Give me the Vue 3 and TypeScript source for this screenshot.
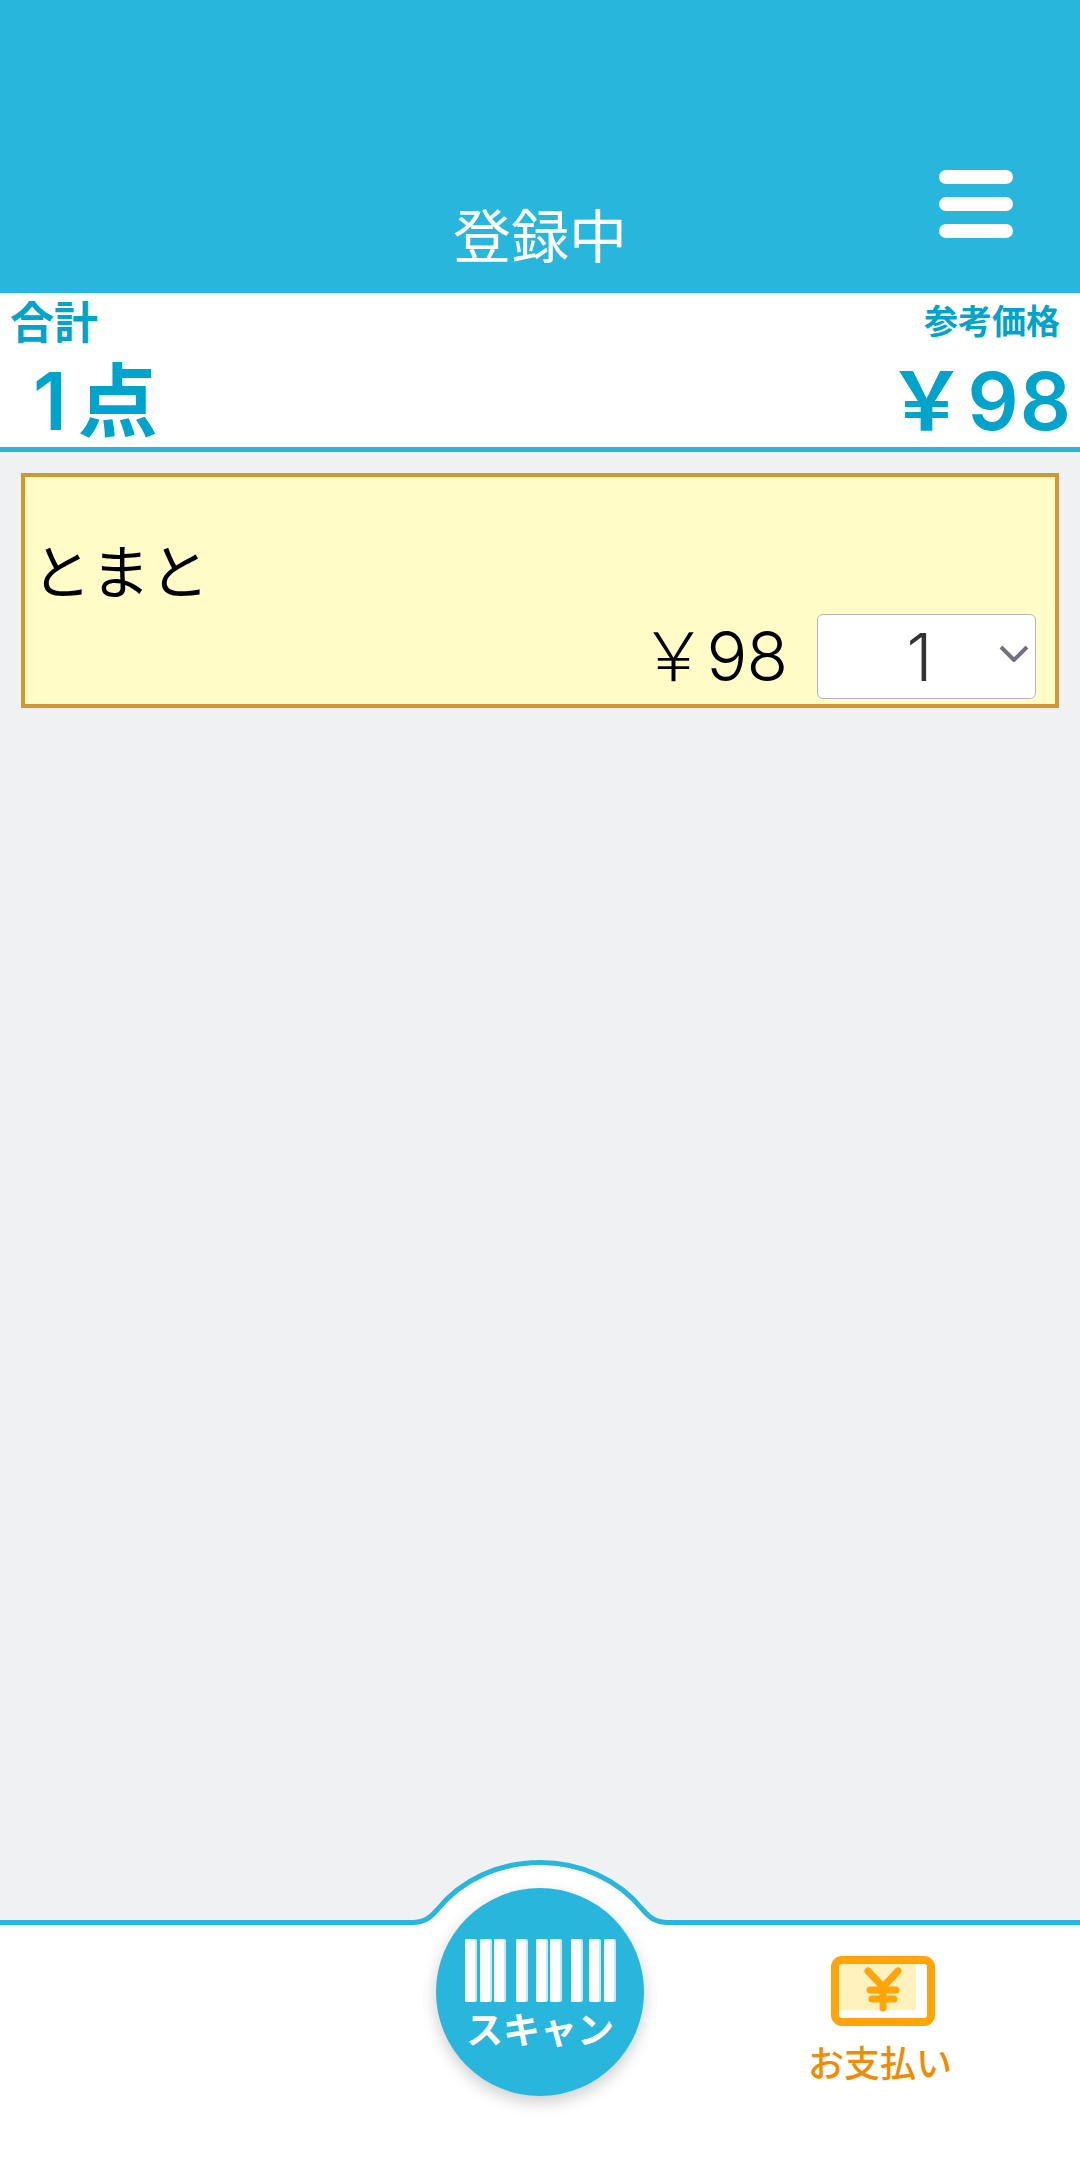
<template>
  <div class="page">
    <header class="head">
      <span class="head-title">登録中</span>
      <div class="menu">
        <i></i>
        <i></i>
        <i></i>
      </div>
    </header>

    <section class="summary">
      <div class="labels">
        <span class="lbl-total">合計</span>
        <span class="lbl-ref">参考価格</span>
      </div>
      <div class="totals">
        <span class="count">1点</span>
        <span class="sum">￥98</span>
      </div>
    </section>

    <main class="list">
      <div v-for="item in items" :key="item.name" class="card">
        <div class="name">{{ item.name }}</div>
        <div class="row">
          <span class="price">￥{{ item.price }}</span>
          <div class="qty">
            <select v-model="item.qty">
              <option v-for="n in 9" :key="n" :value="n">{{ n }}</option>
            </select>
            <svg class="chev" viewBox="0 0 30 17" width="30" height="17">
              <path d="M2 2 L15 15 L28 2" fill="none" stroke="#72727e" stroke-width="4" />
            </svg>
          </div>
        </div>
      </div>
    </main>

    <footer class="foot">
      <svg class="hump" viewBox="0 0 300 70" width="300" height="70">
        <path d="M0 62.5 H22 C34 62.5 40 58 47 50 C72 19 110 2.5 150 2.5 C190 2.5 228 19 253 50 C260 58 266 62.5 278 62.5 H300 V70 H0 Z" fill="#fff" />
        <path d="M0 62.5 H22 C34 62.5 40 58 47 50 C72 19 110 2.5 150 2.5 C190 2.5 228 19 253 50 C260 58 266 62.5 278 62.5 H300" fill="none" stroke="#29b6dd" stroke-width="5" />
      </svg>
      <button class="scan">
        <svg viewBox="0 0 151 63" width="151" height="63">
          <g v-for="x in bars" :key="x">
            <rect :x="x" y="0" width="12" height="63" rx="2" fill="#bdeefa" />
            <rect :x="x" y="0" width="10" height="63" rx="2" fill="#fff" />
          </g>
        </svg>
        <span>スキャン</span>
      </button>
      <div class="pay">
        <svg viewBox="0 0 104 70" width="104" height="70">
          <path d="M8 8 H85 V52 Q85 54 80 54 H8 Z" fill="#fff2bf" />
          <rect x="4" y="4" width="96" height="62" rx="7" fill="none" stroke="#ffa409" stroke-width="8" />
          <path d="M37 15 L52 31 L67 15 M52 31 V52 M39 34 H65 M41 43 H63" fill="none" stroke="#ffa409" stroke-width="7" stroke-linecap="round" stroke-linejoin="round" />
        </svg>
        <span>お支払い</span>
      </div>
    </footer>
  </div>
</template>

<script setup lang="ts">
import { reactive } from 'vue'

const items = reactive([{ name: 'とまと', price: 98, qty: 1 }])
// バーコードの各バーの左端
const bars = [0, 15, 29, 51, 71, 85, 106, 124, 139]
</script>

<style scoped>
.page {
  display: flex;
  flex-direction: column;
  height: 2160px;
  background: #eff1f3;
  font-family: "Noto Sans CJK JP", "Noto Sans", sans-serif;
  overflow: hidden;
}
.head {
  position: relative;
  height: 293px;
  flex: none;
  background: #29b6dd;
  display: flex;
  justify-content: center;
  align-items: flex-end;
  color: #fff;
}
.head-title {
  font-size: 58px;
  line-height: 58px;
  margin-bottom: 31px;
}
.menu {
  position: absolute;
  left: 939px;
  top: 170px;
  display: flex;
  flex-direction: column;
  gap: 13.5px;
}
.menu i {
  display: block;
  width: 74px;
  height: 13.5px;
  border-radius: 7px;
  background: #fff;
}
.summary {
  flex: none;
  height: 154px;
  background: #fff;
  border-bottom: 5px solid #29b6dd;
  color: #00a3cc;
  display: flex;
  flex-direction: column;
}
.labels {
  display: flex;
  justify-content: space-between;
  align-items: center;
  padding: 3px 20px 0 10px;
  height: 48px;
  font-weight: 700;
}
.lbl-total {
  font-size: 44px;
  line-height: 48px;
}
.lbl-ref {
  font-size: 34px;
  line-height: 48px;
}
.totals {
  display: flex;
  justify-content: space-between;
  align-items: center;
  padding: 14px 8px 0 33px;
  font-family: Inter, "Noto Sans CJK JP", sans-serif;
  font-weight: 600;
}
.count {
  font-size: 80px;
  line-height: 86px;
  letter-spacing: 11px;
}
.sum {
  font-size: 80px;
  line-height: 86px;
  letter-spacing: 1px;
}
.list {
  flex: 1;
  padding: 21px 21px 0;
}
.card {
  height: 235px;
  box-sizing: border-box;
  border: 4px solid #cc9933;
  background: #fffcc8;
  padding: 56px 19px 0 7px;
}
.name {
  font-size: 59px;
  line-height: 72px;
  color: #000;
}
.row {
  display: flex;
  justify-content: flex-end;
  align-items: center;
  gap: 30px;
  margin-top: 9px;
}
.price {
  font-family: Inter, "Noto Sans CJK JP", sans-serif;
  font-size: 68px;
  font-weight: 300;
  letter-spacing: -1px;
  color: #000;
  line-height: 85px;
}
.qty {
  position: relative;
  width: 219px;
  height: 85px;
}
.qty select {
  width: 100%;
  height: 100%;
  box-sizing: border-box;
  appearance: none;
  border: 1px solid #b4b4c8;
  border-radius: 6px;
  background: #fff;
  color: #333;
  font-family: Inter, "Noto Sans CJK JP", sans-serif;
  font-size: 66px;
  font-weight: 300;
  text-align: center;
  padding: 0 14px 0 0;
}
.chev {
  position: absolute;
  right: 7px;
  top: 31px;
}
.foot {
  position: relative;
  flex: none;
  height: 235px;
  background: #fff;
  border-top: 5px solid #29b6dd;
}
.hump {
  position: absolute;
  left: 390px;
  top: -65px;
}
.scan {
  position: absolute;
  left: 436px;
  top: -37px;
  width: 208px;
  height: 208px;
  padding: 0;
  border: none;
  border-radius: 50%;
  background: #29b6dd;
  box-shadow: 0 6px 16px rgba(0, 0, 0, 0.2);
  color: #fff;
  font-family: inherit;
  display: flex;
  flex-direction: column;
  align-items: center;
}
.scan svg {
  margin-top: 51px;
}
.scan span {
  font-size: 37px;
  line-height: 46px;
  font-weight: 700;
  margin-top: 3px;
}
.pay {
  position: absolute;
  left: 790px;
  top: 31px;
  width: 186px;
  display: flex;
  flex-direction: column;
  align-items: center;
  color: #f08c00;
  font-size: 36px;
  font-weight: 500;
}
.pay span {
  line-height: 44px;
  margin: 13px 6px 0 0;
}
</style>

<style>
body {
  margin: 0;
}
</style>
